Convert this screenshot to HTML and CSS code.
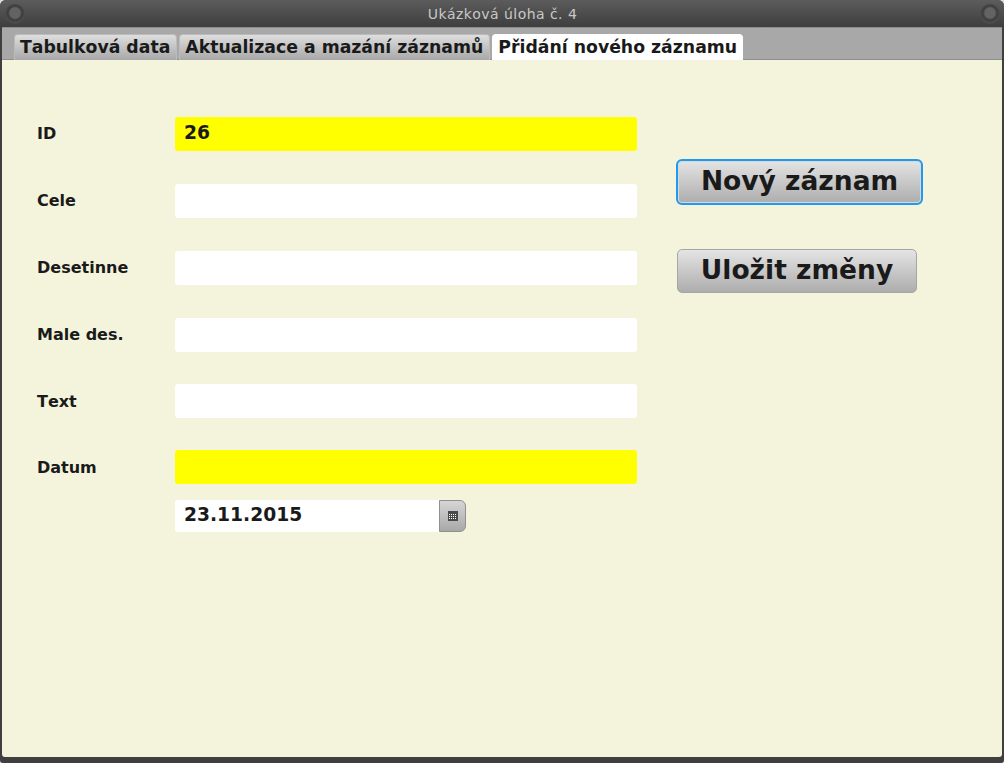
FILE: index.html
```html
<!DOCTYPE html>
<html lang="cs">
<head>
<meta charset="utf-8">
<title>Ukázková úloha č. 4</title>
<link rel="stylesheet" href="styles.css">
</head>
<body>
<div class="window">
  <header class="titlebar">
    <span class="knob"></span>
    <span class="title">Ukázková úloha č. 4</span>
    <span class="knob"></span>
  </header>
  <nav class="tabbar">
    <span class="tab">Tabulková data</span>
    <span class="tab">Aktualizace a mazání záznamů</span>
    <span class="tab tab-active">Přidání nového záznamu</span>
  </nav>
  <main class="content">
    <section class="form">
      <div class="row"><label class="label">ID</label><div class="field field-required">26</div></div>
      <div class="row"><label class="label">Cele</label><div class="field"></div></div>
      <div class="row"><label class="label">Desetinne</label><div class="field"></div></div>
      <div class="row row-tight"><label class="label">Male des.</label><div class="field"></div></div>
      <div class="row row-tight"><label class="label label-low">Text</label><div class="field"></div></div>
      <div class="row row-date"><label class="label label-low">Datum</label><div class="field field-required"></div></div>
      <div class="datepicker">
        <div class="date-value">23.11.2015</div>
        <div class="date-button">
          <svg class="cal" width="10" height="10" viewBox="0 0 10 10">
            <rect width="10" height="10" fill="#4a4a4a"/>
            <g fill="#fff">
              <rect x="1" y="3" width="1" height="1"/><rect x="3" y="3" width="1" height="1"/><rect x="5" y="3" width="1" height="1"/><rect x="7" y="3" width="1" height="1"/>
              <rect x="1" y="5" width="1" height="1"/><rect x="3" y="5" width="1" height="1"/><rect x="5" y="5" width="1" height="1"/><rect x="7" y="5" width="1" height="1"/>
              <rect x="1" y="7" width="1" height="1"/><rect x="3" y="7" width="1" height="1"/><rect x="5" y="7" width="1" height="1"/><rect x="7" y="7" width="1" height="1"/>
            </g>
          </svg>
        </div>
      </div>
    </section>
    <aside class="actions">
      <button class="btn btn-focus">Nový záznam</button>
      <button class="btn btn-save">Uložit změny</button>
    </aside>
  </main>
</div>
</body>
</html>
```
FILE: styles.css
```css
* { box-sizing: border-box; }
html, body { margin: 0; height: 100%; overflow: hidden; background: #dcdcdc; }
body { font-family: "DejaVu Sans", sans-serif; color: #1a1a1a; font-kerning: none; }
.window { display: flex; flex-direction: column; width: 1004px; height: 763px; background: #3f3f3f; border-radius: 6px 6px 3px 3px; overflow: hidden; }
.titlebar { display: flex; align-items: center; justify-content: space-between; height: 27px; flex: none; padding: 0 4px 0 5px; background: linear-gradient(#5c5c5c, #3e3e3e); }
.title { font-size: 14px; font-weight: 400; color: #c8c8c8; letter-spacing: 0.45px; }
.knob { width: 20px; height: 20px; border-radius: 50%; background: radial-gradient(circle at 50% 45%, #636363 0 5px, #3d3d3d 7px, #4d4d4d 10px); }
.tabbar { display: flex; align-items: flex-end; gap: 2px; height: 33px; flex: none; margin: 0 2px; padding: 6px 0 0 12px; background: #a8a8a8; border-top: 1px solid #8e8e8e; border-bottom: 1px solid #8e8e8e; }
.tab { display: flex; align-items: center; height: 26px; margin-bottom: -1px; padding: 0 6px 2px 5px; font-size: 17.3px; font-weight: 700; white-space: nowrap; border-radius: 4px 4px 0 0; border: 1px solid #bbb; border-bottom: 0; background: linear-gradient(#dedede, #a8a8a8); }
.tab-active { padding-right: 5px; background: #fff; border-color: #fff; }
.content { display: flex; flex: 1; margin: 0 2px 6px; background: #f4f4dc; border-radius: 0 0 3px 3px; }
.form { width: 674px; flex: none; padding: 57px 0 0 35px; }
.row { display: flex; align-items: center; height: 34px; margin-bottom: 33px; }
.row-tight { margin-bottom: 32px; }
.row-date { margin-bottom: 16px; }
.label { width: 138px; flex: none; padding-bottom: 2px; font-size: 16px; font-weight: 700; }
.label-low { padding-bottom: 0; }
.field { width: 462px; height: 34px; padding-left: 9px; font-size: 18.7px; font-weight: 700; line-height: 32px; background: #fff; border-radius: 3px; }
.field-required { background: #ff0; }
.datepicker { display: flex; width: 291px; height: 32px; margin-left: 138px; }
.date-value { width: 264px; padding-left: 9px; font-size: 18.7px; font-weight: 700; line-height: 29px; background: #fff; border-radius: 3px 0 0 3px; }
.date-button { display: flex; align-items: center; justify-content: center; width: 27px; background: linear-gradient(#d6d6d6, #a8a8a8); border: 1px solid #8f8f8f; border-radius: 0 6px 6px 0; }
.actions { display: flex; flex-direction: column; align-items: flex-start; padding-top: 99px; }
.btn { display: block; font-family: inherit; font-size: 26.5px; font-weight: 700; color: #1a1a1a; padding: 0 0 4px; background: linear-gradient(#e4e4e4, #adadad); border: 1px solid #a6a6a6; border-radius: 5px; }
.btn-focus { width: 247px; height: 46px; border: 2px solid #1e9bf0; box-shadow: inset 0 0 0 1px #d8d8d8; border-radius: 6px; }
.btn-save { width: 240px; height: 44px; margin: 44px 0 0 1px; }
```
